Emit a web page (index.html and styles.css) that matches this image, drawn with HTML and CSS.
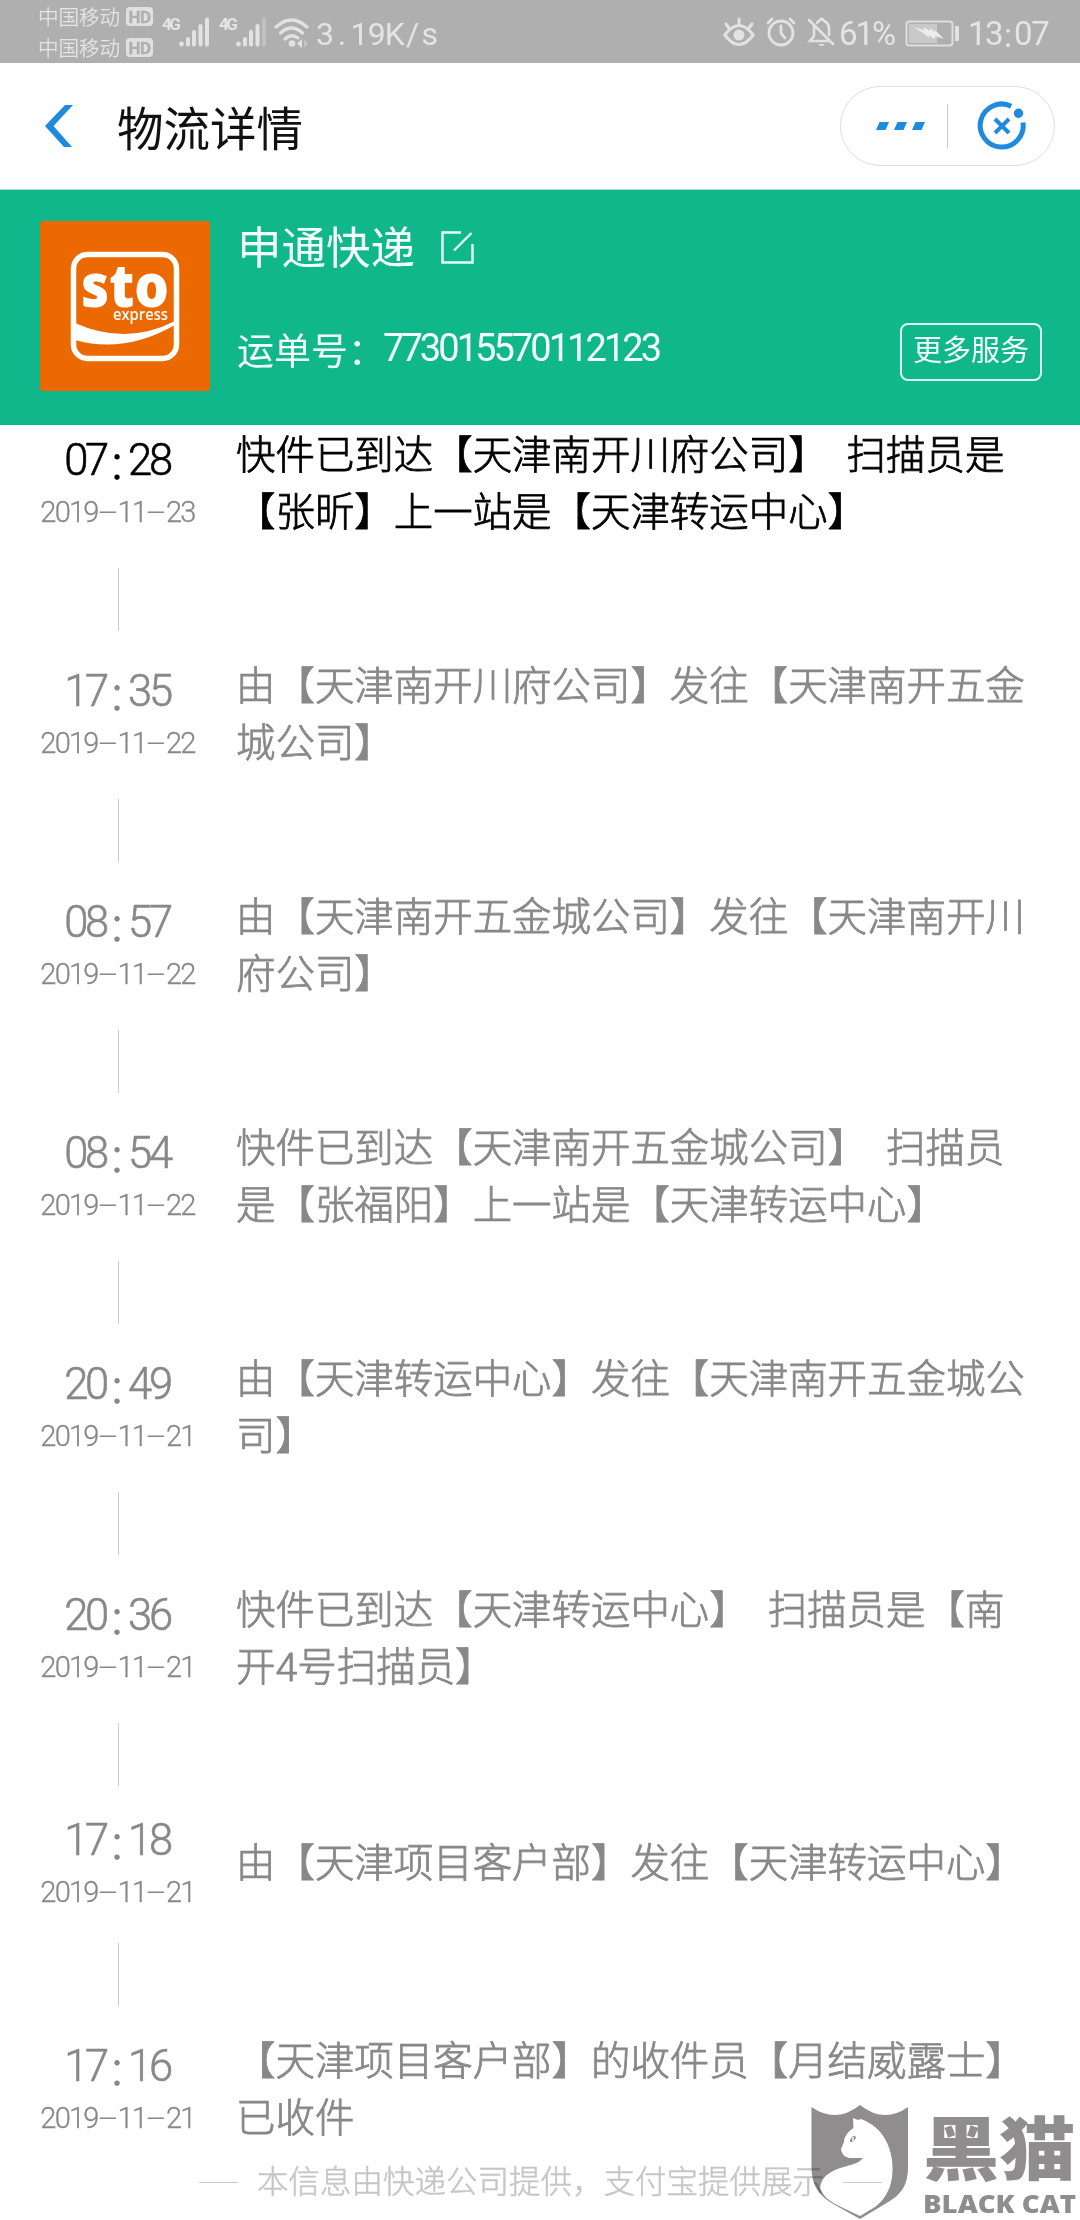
FILE: index.html
```html
<!DOCTYPE html>
<html lang="zh-CN">
<head>
<meta charset="utf-8">
<title>物流详情</title>
<link rel="stylesheet" href="styles.css">
</head>
<body>
<div class="status">
  <div class="carriers">
    <div class="carrier">中国移动<span class="hd">HD</span></div>
    <div class="carrier">中国移动<span class="hd">HD</span></div>
  </div>
  <span class="net">4G</span>
  <svg class="bars" width="31" height="30" viewBox="0 0 31 30"><g fill="#e2e2e2"><circle cx="2.5" cy="27" r="2.4"/><rect x="7" y="20" width="4" height="9.5" rx="2"/><rect x="13" y="13" width="4" height="16.5" rx="2"/><rect x="19.500" y="7" width="4" height="22.500" rx="2"/><rect x="26" y="0.500" width="4" height="29" rx="2"/></g></svg>
  <span class="net net-second">4G</span>
  <svg class="bars" width="31" height="30" viewBox="0 0 31 30"><g fill="#e2e2e2"><circle cx="2.500" cy="27" r="2.400"/><rect x="7" y="20" width="4" height="9.500" rx="2"/><rect x="13" y="13" width="4" height="16.500" rx="2"/><rect x="19.500" y="7" width="4" height="22.500" rx="2"/><rect x="26" y="0.500" width="4" height="29" rx="2" opacity=".35"/></g></svg>
  <svg class="wifi" width="36" height="30" viewBox="0 0 36 30"><g fill="none" stroke="#e2e2e2" stroke-width="3.200" stroke-linecap="round"><path d="M2 9Q17.500-5 33 9"/><path d="M6.500 15Q17.500 5 28.500 15"/><path d="M11 21Q17.500 15 24 20"/></g><circle cx="18" cy="25.500" r="3.300" fill="#e2e2e2"/><path d="M28 21v9l-5-4.500z" fill="#e2e2e2"/><path d="M30 21v9l4-4.500z" fill="#c4c4c4"/></svg>
  <span class="speed">3<i>.</i>19K<i>/</i>s</span>
  <span class="grow"></span>
  <svg class="eye" width="32" height="30" viewBox="0 0 32 30"><g fill="none" stroke="#e2e2e2" stroke-width="3" stroke-linecap="round"><path d="M1.800 18Q16-1 30.200 18Q16 37 1.800 18z"/><path d="M16 2v5M3 7l3 4M29 7l-3 4"/></g><circle cx="16" cy="18" r="5.500" fill="#e2e2e2"/></svg>
  <svg class="alarm" width="30" height="30" viewBox="0 0 30 30"><g fill="none" stroke="#e2e2e2" stroke-width="2.800" stroke-linecap="round"><circle cx="15" cy="16" r="12"/><path d="M15 9v7l4 5M2 6l4-4M28 6l-4-4"/></g></svg>
  <svg class="bell" width="28" height="30" viewBox="0 0 28 30"><g fill="none" stroke="#e2e2e2" stroke-width="2.600" stroke-linecap="round"><path d="M2 3l24 24M7 9v10l-4 5h19M10 6q1-2 3-2.500q1-3 3-1l1 1.500q5 2 5 8v6"/></g><path d="M11 27h7q-3.500 4-7 0z" fill="#e2e2e2"/></svg>
  <span class="percent">61%</span>
  <svg class="battery" width="55" height="27" viewBox="0 0 55 27"><rect x="1.500" y="1.500" width="46" height="24" rx="3" fill="none" stroke="#dedede" stroke-width="2"/><rect x="4" y="4" width="28" height="19" fill="#c9c9c9"/><path d="M9 7l10 3 0-3 6 4 0-3 5 4 0-2 9 9-9-3 0 3-6-4 0 3-6-5z" fill="#ececec"/><rect x="50" y="6" width="4" height="15" rx="1" fill="#e2e2e2"/></svg>
  <span class="clock">13<i>:</i>07</span>
</div>

<header class="nav">
  <svg class="back" width="29" height="42" viewBox="0 0 29 42"><path d="M20 0h8L8.500 21 27 42h-8L0 21z" fill="#1e8be0"/></svg>
  <h1>物流详情</h1>
  <div class="capsule">
    <svg width="50" height="10" viewBox="0 0 50 10"><path d="M3.500 1H13L9.500 9H0zM21.500 1H31L27.500 9H18zM39.500 1H49L45.500 9H36z" fill="#1e8be0"/></svg>
    <span class="divider"></span>
    <svg width="50" height="50" viewBox="0 0 50 50"><path d="M34.200 5.200A21.500 21.500 0 1 0 46 21.500" fill="none" stroke="#1e8be0" stroke-width="5"/><circle cx="41.500" cy="12.300" r="4.700" fill="#1e8be0"/><path d="M18 18l14 14M32 18L18 32" stroke="#1e8be0" stroke-width="4"/></svg>
  </div>
</header>

<section class="company">
  <svg class="logo" width="170" height="170" viewBox="0 0 170 170"><rect width="170" height="170" rx="3" fill="#ec6800"/><rect x="33.500" y="33.500" width="103" height="104" rx="14" fill="none" stroke="#fff" stroke-width="5.500"/><text x="41" y="86" class="sto" textLength="88" lengthAdjust="spacingAndGlyphs">sto</text><text x="73" y="98.500" class="express" textLength="55" lengthAdjust="spacingAndGlyphs">express</text><path d="M35 102Q86 125 135 100V104Q84 133 35 119z" fill="#fff"/></svg>
  <div class="info">
    <div class="name">申通快递<svg width="33" height="33" viewBox="0 0 33 33"><path d="M20 1.500H1.500V31.500H31.500V13M13 19.500L30.500 2" fill="none" stroke="#e4fff6" stroke-width="2.400"/></svg></div>
    <div class="waybill"><span class="label">运单号：</span><span class="number">773015570112123</span></div>
  </div>
  <div class="more">更多服务</div>
</section>

<main class="track">
  <article class="step current"><div class="when"><time>07<i>:</i>28</time><div class="date">2019<i>-</i>11<i>-</i>23</div><span class="stem"></span></div><p>快件已到达【天津南开川府公司】<span class="gap"> </span>扫描员是<br>【张昕】上一站是【天津转运中心】</p></article>
  <article class="step"><div class="when"><time>17<i>:</i>35</time><div class="date">2019<i>-</i>11<i>-</i>22</div><span class="stem"></span></div><p>由【天津南开川府公司】发往【天津南开五金<br>城公司】</p></article>
  <article class="step"><div class="when"><time>08<i>:</i>57</time><div class="date">2019<i>-</i>11<i>-</i>22</div><span class="stem"></span></div><p>由【天津南开五金城公司】发往【天津南开川<br>府公司】</p></article>
  <article class="step"><div class="when"><time>08<i>:</i>54</time><div class="date">2019<i>-</i>11<i>-</i>22</div><span class="stem"></span></div><p>快件已到达【天津南开五金城公司】<span class="gap"> </span>扫描员<br>是【张福阳】上一站是【天津转运中心】</p></article>
  <article class="step"><div class="when"><time>20<i>:</i>49</time><div class="date">2019<i>-</i>11<i>-</i>21</div><span class="stem"></span></div><p>由【天津转运中心】发往【天津南开五金城公<br>司】</p></article>
  <article class="step"><div class="when"><time>20<i>:</i>36</time><div class="date">2019<i>-</i>11<i>-</i>21</div><span class="stem"></span></div><p>快件已到达【天津转运中心】<span class="gap"> </span>扫描员是【南<br>开<span class="digit">4</span>号扫描员】</p></article>
  <article class="step single"><div class="when"><time>17<i>:</i>18</time><div class="date">2019<i>-</i>11<i>-</i>21</div><span class="stem"></span></div><p>由【天津项目客户部】发往【天津转运中心】</p></article>
  <article class="step last"><div class="when"><time>17<i>:</i>16</time><div class="date">2019<i>-</i>11<i>-</i>21</div></div><p>【天津项目客户部】的收件员【月结威露士】<br>已收件</p></article>
</main>

<footer class="note"><span class="rule"></span><span class="notice">本信息由快递公司提供，支付宝提供展示</span><span class="rule"></span></footer>

<div class="watermark">
  <svg width="98" height="116" viewBox="0 0 98 116"><path fill="#8f8d8e" fill-rule="evenodd" d="M.500 3Q25 20 49 1Q73 20 97 3V62C97 80 92 90 74 100L49 115L24 101C8 92 .500 82 .500 62zM42 14L42.500 24C35 29 33 34 33 38L30 45C31 52 36 54 40 54H52C47 61 36 61 24 66C13 71 10 77 9 84C12 92 18 97 28 102L49 112L64 103C80 91 83 73 81 56C78 34 66 21 50 15L47 16z"/><path d="M39 36Q42 30 45 33Q44 38 39 38z" fill="#8f8d8e"/><path d="M42 33v4" stroke="#fff" stroke-width="1.500"/></svg>
  <svg class="brand" width="156" height="116" viewBox="0 0 156 116"><text class="brand-cn" transform="translate(1 71) scale(1.06 .96)">黑猫</text><text class="brand-en" x="1" y="109" textLength="153" lengthAdjust="spacingAndGlyphs">BLACK CAT</text></svg>
</div>
</body>
</html>
```
FILE: styles.css
```css
* { box-sizing: border-box; }
body {
  margin: 0;
  width: 1080px;
  height: 2220px;
  overflow: hidden;
  position: relative;
  background: #fff;
  font-family: Roboto, "Noto Sans CJK SC", sans-serif;
  font-weight: 300;
  text-spacing-trim: space-all;
  white-space: nowrap;
}
i { font-style: normal; display: inline-block; text-align: center; letter-spacing: 0; }
svg { display: block; flex: none; }

.status {
  height: 63px;
  background: #afafaf;
  color: #e4e4e4;
  display: flex;
  align-items: center;
  padding: 0 34px 0 38px;
}
.carriers { width: 124px; padding-top: 1px; }
.carrier {
  display: flex;
  align-items: center;
  height: 31px;
  font: 300 20.500px/31px "Noto Sans CJK SC", sans-serif;
  -webkit-text-stroke: .3px;
}
.hd {
  width: 27px;
  height: 19px;
  margin-left: 6px;
  border-radius: 4px;
  background: #e0e0e0;
  color: #afafaf;
  font: 700 17px/20px Roboto, sans-serif;
  letter-spacing: -.500px;
  text-align: center;
}
.net { width: 17px; margin-top: -14px; font: 700 17px/17px Roboto, sans-serif; letter-spacing: -2.500px; }
.net-second { margin-left: 9px; }
.wifi { margin-left: 7px; margin-top: 2px; }
.speed { margin-left: 6px; margin-top: 5px; font-size: 32px; line-height: 38px; letter-spacing: -0.900px; font-weight: 400; }
.speed i { width: 17.500px; }
.grow { flex: 1; }
.alarm { margin-left: 11px; }
.bell { margin-left: 11px; }
.percent { width: 61px; margin: 5px 0 0 4px; font: 400 33px/38px Roboto, sans-serif; letter-spacing: -2px; }
.battery { margin: 3px 0 0 5px; }
.clock { width: 78px; margin: 5px 0 0 8px; font: 400 33px/38px Roboto, sans-serif; letter-spacing: -1.500px; }
.clock i { width: 12px; transform: translateY(2px); }

.nav {
  height: 127px;
  border-bottom: 1px solid #a9d8cf;
  display: flex;
  align-items: center;
  padding: 0 25px 0 45px;
}
.nav h1 {
  flex: 1;
  margin: -1px 0 0 43px;
  font: 400 46.500px/60px "Noto Sans CJK SC", sans-serif;
  color: #111;
}
.capsule {
  width: 215px;
  height: 80px;
  border: 1px solid #dedede;
  border-radius: 40px;
  display: flex;
  align-items: center;
  padding-left: 35px;
}
.divider { width: 1px; height: 44px; margin: 0 29px 0 21px; background: #ccc; }

.company {
  height: 235px;
  background: #0fb78b;
  color: #f4fffc;
  display: flex;
  padding: 31px 38px 0 40px;
}
.sto { font: 800 60px "Open Sans", sans-serif; fill: #fff; }
.express { font: 600 15.500px "Open Sans", sans-serif; fill: #fff; }
.info { flex: 1; padding-left: 27px; }
.name {
  display: flex;
  align-items: center;
  height: 54px;
  margin-top: -3px;
  font: 400 44.500px/54px "Noto Sans CJK SC", sans-serif;
}
.name svg { margin: 5px 0 0 26px; }
.waybill { display: flex; align-items: center; height: 50px; margin-top: 50px; }
.label { width: 146px; padding-top: 3px; font: 400 37px/46px "Noto Sans CJK SC", sans-serif; }
.number { margin-top: 2px; font-size: 38px; letter-spacing: -2.950px; font-weight: 400; }
.more {
  width: 142px;
  height: 58px;
  margin-top: 102px;
  border: 2.500px solid #dcfff5;
  border-radius: 8px;
  text-align: center;
  font: 400 29px/47px "Noto Sans CJK SC", sans-serif;
}

.track { padding-top: 1px; color: #888; }
.step { display: grid; grid-template-columns: 236px 1fr; height: 231px; }
.when { display: flex; flex-direction: column; align-items: center; padding: 10px 0 0 1px; }
time { margin-left: -3px; font-size: 43.500px; line-height: 50px; letter-spacing: -3.200px; -webkit-text-stroke: .6px; }
time i { width: 22px; transform: translateY(4px); -webkit-text-stroke: 1.800px; }
.date { margin: 9px 0 0 -2px; font-size: 29px; line-height: 34px; letter-spacing: -1.800px; -webkit-text-stroke: .3px; }
.date i { width: 20px; transform: scaleX(2.4); -webkit-text-stroke: 0; }
.stem { width: 1px; height: 63px; margin-top: 39px; background: #ccc; }
.step p { margin: -3px 0 0; font: 300 39.450px/57px "Noto Sans CJK SC", sans-serif; -webkit-text-stroke: .8px; }
.gap { display: inline-block; width: 19px; }
.digit { font-family: Roboto, sans-serif; }
.current time, .current p { color: #000; }
.single { height: 220px; }
.single .when { padding-top: 4px; }
.single .stem { margin-top: 34px; }
.single p { padding-top: 22px; }
.last { height: 125px; }

.note {
  display: flex;
  align-items: center;
  height: 50px;
  padding-left: 199px;
  gap: 19px;
  color: #c6c6c6;
  font: 300 31.500px/46px "Noto Sans CJK SC", sans-serif;
}
.notice { margin-top: -6px; -webkit-text-stroke: .5px; }
.rule { width: 39px; height: 1px; background: #ccc; }

/* Brand mark stamped over the lower right corner of the page */
.watermark {
  position: absolute;
  left: 811px;
  top: 2104px;
  display: flex;
  mix-blend-mode: multiply;
}
.brand { margin-left: 13px; }
.brand-cn { font: 900 72px "Noto Sans CJK SC", sans-serif; fill: #8f8d8e; }
.brand-en { font: 800 24px "Open Sans", sans-serif; fill: #8f8d8e; }
```
